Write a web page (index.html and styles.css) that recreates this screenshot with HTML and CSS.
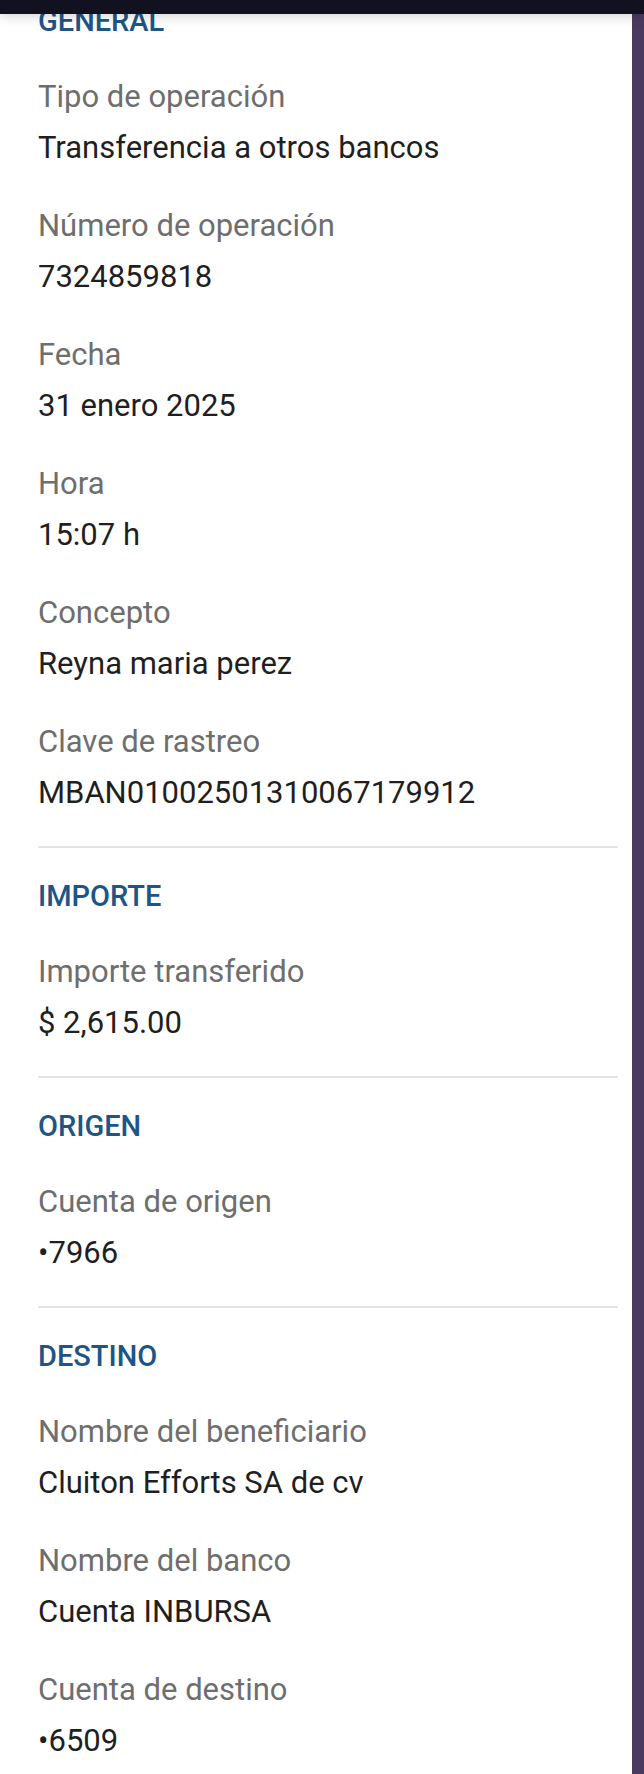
FILE: index.html
```html
<!DOCTYPE html>
<html lang="es">
<head>
  <meta charset="UTF-8" />
  <meta name="viewport" content="width=device-width, initial-scale=1.0"/>
  <title>Detalle de operación</title>
  <link rel="stylesheet" href="styles.css">
</head>
<body>
  <div class="status-bar"></div>

  <div class="screen">
    <div class="detail-sheet">

      <section class="detail-section">
        <h3 class="section-title">GENERAL</h3>
        <div class="field">
          <span class="field-label">Tipo de operación</span>
          <span class="field-value">Transferencia a otros bancos</span>
        </div>
        <div class="field">
          <span class="field-label">Número de operación</span>
          <span class="field-value">7324859818</span>
        </div>
        <div class="field">
          <span class="field-label">Fecha</span>
          <span class="field-value">31 enero 2025</span>
        </div>
        <div class="field">
          <span class="field-label">Hora</span>
          <span class="field-value">15:07 h</span>
        </div>
        <div class="field">
          <span class="field-label">Concepto</span>
          <span class="field-value">Reyna maria perez</span>
        </div>
        <div class="field">
          <span class="field-label">Clave de rastreo</span>
          <span class="field-value">MBAN01002501310067179912</span>
        </div>
      </section>

      <section class="detail-section">
        <h3 class="section-title">IMPORTE</h3>
        <div class="field">
          <span class="field-label">Importe transferido</span>
          <span class="field-value">$ 2,615.00</span>
        </div>
      </section>

      <section class="detail-section">
        <h3 class="section-title">ORIGEN</h3>
        <div class="field">
          <span class="field-label">Cuenta de origen</span>
          <span class="field-value">•7966</span>
        </div>
      </section>

      <section class="detail-section">
        <h3 class="section-title">DESTINO</h3>
        <div class="field">
          <span class="field-label">Nombre del beneficiario</span>
          <span class="field-value">Cluiton Efforts SA de cv</span>
        </div>
        <div class="field">
          <span class="field-label">Nombre del banco</span>
          <span class="field-value">Cuenta INBURSA</span>
        </div>
        <div class="field">
          <span class="field-label">Cuenta de destino</span>
          <span class="field-value">•6509</span>
        </div>
      </section>

    </div>
    <div class="side-strip"></div>
  </div>
</body>
</html>
```

FILE: styles.css
```css
body {
  font-family: Roboto, 'Noto Sans', Arial, sans-serif;
  margin: 0;
  background-color: #4b3a5f;
}

.status-bar {
  position: fixed;
  top: 0;
  left: 0;
  right: 0;
  height: 14px;
  background: #11111f;
  box-shadow: 0 2px 12px rgba(0, 0, 0, 0.18);
  z-index: 2;
}

.screen {
  display: flex;
  min-height: 1774px;
}

.detail-sheet {
  flex: 1;
  background: #ffffff;
  padding: 1px 14px 0 38px;
}

.side-strip {
  width: 12px;
  background: #4b3a5f;
}

.detail-section {
  display: flex;
  flex-direction: column;
  gap: 38px;
  padding: 28px 0 33px;
  border-top: 2px solid #e4e4e4;
}

.detail-section:first-child {
  border-top: none;
  padding-top: 0;
}

.section-title {
  margin: 0 0 -2px;
  font-size: 29px;
  font-weight: 500;
  line-height: 40px;
  color: #1d5586;
}

.field {
  display: flex;
  flex-direction: column;
  gap: 11px;
}

.field-label,
.field-value {
  font-size: 31px;
  line-height: 40px;
}

.field-label {
  color: #6e6e6e;
}

.field-value {
  color: #1f1f1f;
}
```
